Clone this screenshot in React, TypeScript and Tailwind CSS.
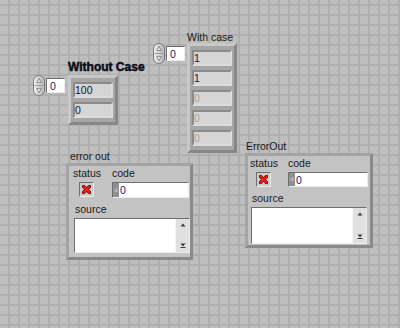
import React from "react"

const font = { fontFamily: '"Liberation Sans", Arial, sans-serif' }

const sunken =
  "border border-t-[#6f6f6f] border-l-[#6f6f6f] border-r-[#ececec] border-b-[#ececec]"

function Spinner() {
  return (
    <svg width="12" height="21" viewBox="0 0 12 21">
      <defs>
        <linearGradient id="spin" x1="0" y1="0" x2="1" y2="0">
          <stop offset="0" stopColor="#f4f4f4" />
          <stop offset="1" stopColor="#b4b4b4" />
        </linearGradient>
      </defs>
      <rect x="0.5" y="0.5" width="11" height="20" rx="5.5" fill="url(#spin)" stroke="#7d7d7d" />
      <line x1="1.5" y1="10.5" x2="10.5" y2="10.5" stroke="#9c9c9c" />
      <path d="M6 3.2 L8.3 7.6 H3.7 Z" fill="#e8e8e8" stroke="#6a6a6a" strokeWidth="0.7" />
      <path d="M6 17.8 L8.3 13.4 H3.7 Z" fill="#e8e8e8" stroke="#6a6a6a" strokeWidth="0.7" />
    </svg>
  )
}

function NumericControl({ value }: { value: string }) {
  return (
    <div className="flex items-center gap-[1px]">
      <Spinner />
      <div className={`w-[19px] h-[15px] bg-white ${sunken} flex items-center pl-[3px]`}>
        <span className="text-[10.5px] leading-[12px] text-[#1c2461]">{value}</span>
      </div>
    </div>
  )
}

function ArrayIndicator({ label, items, bold }: { label: string; items: { v: string; off?: boolean }[]; bold?: boolean }) {
  return (
    <div className="flex flex-col">
      {bold ? (
        <span className="text-[12px] leading-[14px] font-bold text-[#0c0c18] [-webkit-text-stroke:0.5px_#0c0c18] mb-[1px]">{label}</span>
      ) : (
        <span className="text-[10.5px] leading-[12px] text-[#1a1a1a]">{label}</span>
      )}
      <div className="w-[50px] border-[3px] border-t-[#c8c8c8] border-l-[#c8c8c8] border-r-[#878787] border-b-[#878787] bg-[#a6a6a6] pl-[2px] pt-[4px] pb-[4px] flex flex-col gap-[4px]">
        {items.map((it, i) => (
          <div
            key={i}
            className="w-[40px] h-[16px] border-2 border-t-[#8a8a8a] border-l-[#8a8a8a] border-r-[#dcdcdc] border-b-[#dcdcdc] bg-[#d5d5d5] flex items-center"
          >
            <span className={`text-[10.5px] leading-[12px] ${it.off ? "text-[#a3a3a3]" : "text-[#14142e]"}`}>{it.v}</span>
          </div>
        ))}
      </div>
    </div>
  )
}

function RedX() {
  return (
    <svg width="9" height="9" viewBox="0 0 9 9">
      <path d="M1.5 1.5 L7.5 7.5 M7.5 1.5 L1.5 7.5" stroke="#5a0000" strokeWidth="3.2" strokeLinecap="round" />
      <path d="M1.5 1.5 L7.5 7.5 M7.5 1.5 L1.5 7.5" stroke="#ff1c1c" strokeWidth="1.8" strokeLinecap="round" />
    </svg>
  )
}

type ClusterProps = {
  label: string
  labelOffset: string
  frame: string
  pad: string
  statusCol: string
  codeBox: string
  srcBox: string
}

function ErrorCluster({ label, labelOffset, frame, pad, statusCol, codeBox, srcBox }: ClusterProps) {
  return (
    <div className="flex flex-col">
      <span className={`text-[10.5px] leading-[12px] text-[#1a1a1a] ${labelOffset}`}>{label}</span>
      <div className={`${frame} border-[3px] border-t-[#a4a4a4] border-l-[#a4a4a4] border-r-[#8a8a8a] border-b-[#8a8a8a] bg-[#c3c3c3] pt-[1px] ${pad} flex flex-col`}>
        <div className="flex">
          <div className={`${statusCol} flex flex-col`}>
            <span className="text-[10.5px] leading-[12px] text-[#1a1a1a]">status</span>
            <div className={`mt-[3px] ml-[6px] w-[15px] h-[15px] ${sunken} bg-[#cbcbcb] flex items-center justify-center`}>
              <RedX />
            </div>
          </div>
          <div className="flex flex-col">
            <span className="text-[10.5px] leading-[12px] text-[#1a1a1a]">code</span>
            <div className={`mt-[3px] ${codeBox} ${sunken} flex`}>
              <div className="w-[6px] h-full bg-[#8f8f8f] flex items-center justify-center">
                <span className="text-[6px] leading-[7px] text-[#d8d8d8]">d</span>
              </div>
              <div className="flex-1 bg-white flex items-center pl-[1px]">
                <span className="text-[10.5px] leading-[12px] text-[#141a66]">0</span>
              </div>
            </div>
          </div>
        </div>
        <span className="mt-[5px] ml-[2px] text-[10.5px] leading-[12px] text-[#1a1a1a]">source</span>
        <div className={`mt-[3px] ml-[1px] ${srcBox} ${sunken} bg-white flex justify-end`}>
          <div className="w-[14px] h-full bg-[#e0e0e0] border-l border-[#f6f6f6] flex flex-col items-center justify-between py-[4px]">
            <svg width="6" height="4" viewBox="0 0 6 4">
              <path d="M3 0.5 L5.5 3.5 H0.5 Z" fill="#3a3a3a" />
            </svg>
            <svg width="6" height="5" viewBox="0 0 6 5">
              <path d="M0.5 0.5 H5.5 L3 3.5 Z" fill="#3a3a3a" />
              <line x1="0.5" y1="4.5" x2="5.5" y2="4.5" stroke="#3a3a3a" />
            </svg>
          </div>
        </div>
      </div>
    </div>
  )
}

export default function App() {
  return (
    <div
      style={font}
      className="relative w-[400px] h-[328px] overflow-hidden bg-[#bebebe] bg-[linear-gradient(to_right,#afafaf_2px,transparent_2px),linear-gradient(to_bottom,#afafaf_2px,transparent_2px)] bg-[length:10px_10px] bg-[position:8px_4px]"
    >
      {/* Without Case */}
      <div className="absolute left-[33px] top-[75px]">
        <NumericControl value="0" />
      </div>
      <div className="absolute left-[68px] top-[60px]">
        <ArrayIndicator label="Without Case" bold items={[{ v: "100" }, { v: "0" }]} />
      </div>

      {/* With case */}
      <div className="absolute left-[153px] top-[43px]">
        <NumericControl value="0" />
      </div>
      <div className="absolute left-[187px] top-[31px]">
        <ArrayIndicator
          label="With case"
          items={[{ v: "1" }, { v: "1" }, { v: "0", off: true }, { v: "0", off: true }, { v: "0", off: true }]}
        />
      </div>

      {/* error clusters */}
      <div className="absolute left-[66px] top-[150px]">
        <ErrorCluster
          label="error out"
          labelOffset="ml-[4px] mb-[1px]"
          frame="w-[127px] h-[97px]"
          pad="pl-[4px]"
          statusCol="w-[39px]"
          codeBox="w-[77px] h-[16px]"
          srcBox="w-[116px] h-[35px]"
        />
      </div>
      <div className="absolute left-[245px] top-[140px]">
        <ErrorCluster
          label="ErrorOut"
          labelOffset="ml-[1px] mb-[1px]"
          frame="w-[128px] h-[95px]"
          pad="pl-[2px]"
          statusCol="w-[38px]"
          codeBox="w-[80px] h-[15px]"
          srcBox="w-[116px] h-[37px]"
        />
      </div>
    </div>
  )
}
